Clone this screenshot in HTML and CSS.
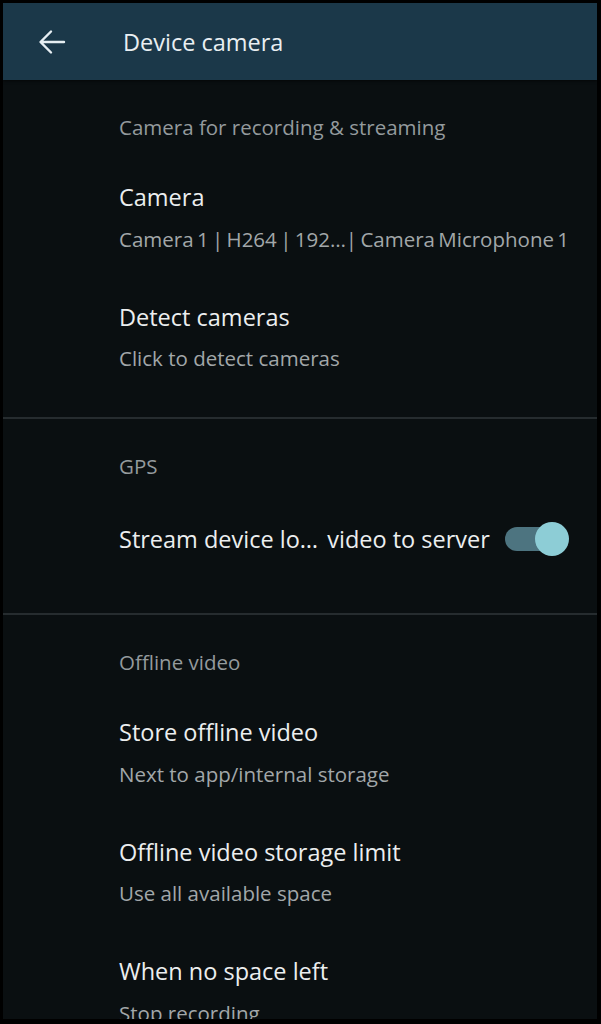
FILE: index.html
```html
<!DOCTYPE html>
<html lang="en">
<head>
<meta charset="utf-8">
<title>Device camera</title>
<link rel="stylesheet" href="styles.css">
</head>
<body>
<div class="app">
  <header class="topbar">
    <svg class="back" width="28" height="28" viewBox="0 0 28 28" aria-hidden="true">
      <path d="M26 14H3 M13 3.5L2.5 14L13 24.5" fill="none" stroke="#e6eef2" stroke-width="2.4" stroke-linecap="round" stroke-linejoin="round"/>
    </svg>
    <h1 class="title">Device camera</h1>
  </header>

  <section class="section first">
    <div class="label">Camera for recording &amp; streaming</div>
    <div class="item">
      <div class="item-title">Camera</div>
      <div class="item-sub tight">Camera 1 | H264 | 192…| Camera Microphone 1</div>
    </div>
    <div class="item">
      <div class="item-title">Detect cameras</div>
      <div class="item-sub">Click to detect cameras</div>
    </div>
  </section>

  <section class="section">
    <div class="label">GPS</div>
    <div class="item item-toggle">
      <div class="item-title">Stream device lo<span class="dots">…</span> video to server</div>
      <div class="switch"><span class="track"></span><span class="thumb"></span></div>
    </div>
  </section>

  <section class="section last">
    <div class="label">Offline video</div>
    <div class="item">
      <div class="item-title">Store offline video</div>
      <div class="item-sub">Next to app/internal storage</div>
    </div>
    <div class="item">
      <div class="item-title">Offline video storage limit</div>
      <div class="item-sub">Use all available space</div>
    </div>
    <div class="item">
      <div class="item-title">When no space left</div>
      <div class="item-sub">Stop recording</div>
    </div>
  </section>
</div>
</body>
</html>
```

FILE: styles.css
```css
html, body {
  margin: 0;
  padding: 0;
  background: #000;
  height: 1024px;
  overflow: hidden;
}

.app {
  margin: 3px 4px 0 3px;
  height: 1016px;
  background: #0a0f11;
  overflow: hidden;
  font-family: "Open Sans", "Noto Sans", sans-serif;
}

.topbar {
  height: 77px;
  background: #1b3849;
  display: flex;
  align-items: center;
  box-shadow: 0 1px 3px rgba(0,0,0,0.6);
}

.back {
  margin-left: 35px;
  flex: none;
}

.title {
  margin: 0 0 0 57px;
  font-size: 23.5px;
  font-weight: 400;
  color: #e9eff2;
}

.section {
  padding: 35px 0 20px 116px;
  border-bottom: 2px solid #262c2f;
}

.section.last {
  border-bottom: none;
}

.label {
  font-size: 20.5px;
  line-height: 24px;
  color: #949a9d;
  margin-bottom: 19px;
}

.item {
  padding: 24px 0;
}

.item-title {
  font-size: 23.5px;
  line-height: 30px;
  color: #eceeef;
}

.dots {
  letter-spacing: 3px;
}

.item-sub {
  margin-top: 11.5px;
  font-size: 20.5px;
  line-height: 30px;
  color: #a2a7a9;
  white-space: nowrap;
}

.item-sub.tight {
  word-spacing: -2px;
}

.item-toggle {
  display: flex;
  align-items: center;
  padding: 25px 0 37px;
}

.switch {
  position: relative;
  width: 64px;
  height: 34px;
  margin-left: 15px;
}

.track {
  position: absolute;
  left: 0;
  top: 5px;
  width: 56px;
  height: 24px;
  border-radius: 12px;
  background: #4d7480;
}

.thumb {
  position: absolute;
  right: 0;
  top: 0;
  width: 34px;
  height: 34px;
  border-radius: 50%;
  background: #8dcdd6;
}
```
